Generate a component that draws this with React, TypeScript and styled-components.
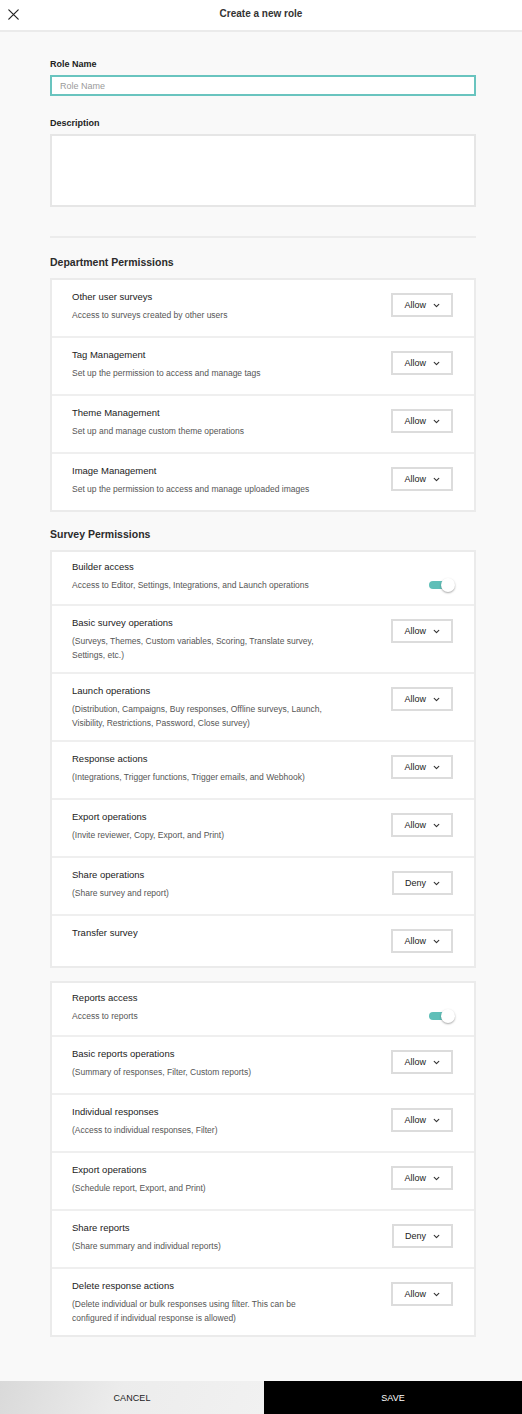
import React from "react";
import styled, { createGlobalStyle } from "styled-components";

const GlobalStyle = createGlobalStyle`
  * { box-sizing: border-box; }
  html, body { margin: 0; padding: 0; }
  body {
    background: #f9f9f9;
    font-family: "Liberation Sans", Arial, Helvetica, sans-serif;
    color: #222;
    -webkit-font-smoothing: antialiased;
  }
`;

const Page = styled.div`
  min-height: 100vh;
  display: flex;
  flex-direction: column;
`;

const Header = styled.header`
  height: 32px;
  background: #fff;
  border-bottom: 2px solid #ebebeb;
  display: grid;
  grid-template-columns: 30px 1fr 30px;
  align-items: center;
`;

const CloseButton = styled.button`
  border: 0;
  background: transparent;
  padding: 0;
  margin-left: 7px;
  width: 12px;
  height: 12px;
  display: flex;
  align-items: center;
  justify-content: center;
  cursor: pointer;
  margin-top: -1px;
`;

const Title = styled.h1`
  margin: 0;
  text-align: center;
  font-size: 10px;
  font-weight: 700;
  color: #333;
  margin-top: -4px;
`;

const Main = styled.main`
  flex: 1;
  padding: 26px 46px 44px 50px;
  display: flex;
  flex-direction: column;
`;

const Field = styled.div<{ $gap?: number }>`
  display: flex;
  flex-direction: column;
  margin-top: ${(p) => p.$gap ?? 0}px;
`;

const Label = styled.label`
  font-size: 9px;
  font-weight: 700;
  line-height: 12px;
  color: #222;
  margin-bottom: 5px;
`;

const TextInput = styled.input`
  height: 21px;
  border: 2px solid #69c4bf;
  background: #fff;
  padding: 0 8px;
  font-family: inherit;
  font-size: 9px;
  color: #222;
  outline: none;
  &::placeholder { color: #9a9a9a; }
`;

const TextArea = styled.textarea`
  height: 73px;
  border: 2px solid #e6e6e6;
  background: #fff;
  resize: none;
  font-family: inherit;
  font-size: 9px;
  outline: none;
`;

const Divider = styled.hr`
  border: 0;
  height: 2px;
  background: #ececec;
  margin: 29px 0 0;
`;

const SectionTitle = styled.h2<{ $gap: number }>`
  margin: ${(p) => p.$gap}px 0 9px;
  font-size: 10.5px;
  line-height: 14px;
  font-weight: 700;
  color: #2b2b2b;
`;

const Card = styled.section<{ $gap?: number }>`
  display: flex;
  flex-direction: column;
  gap: 2px;
  background: #efefef;
  border: 2px solid #ebebeb;
  margin-top: ${(p) => p.$gap ?? 0}px;
`;

const Row = styled.div<{ $toggle?: boolean; $tall?: boolean }>`
  display: flex;
  justify-content: space-between;
  align-items: ${(p) => (p.$toggle ? "flex-end" : "flex-start")};
  padding: ${(p) => (p.$toggle ? "8px 19px 12px 20px" : "10px 21px 10px 20px")};
  min-height: ${(p) => (p.$tall ? 56 : 50)}px;
  background: #fff;
`;

const RowText = styled.div`
  max-width: 256px;
`;

const RowTitle = styled.div`
  font-size: 9.5px;
  line-height: 14px;
  color: #222;
`;

const RowDesc = styled.div`
  margin-top: 4px;
  font-size: 8.5px;
  line-height: 14px;
  color: #555;
`;

const Select = styled.button`
  margin-top: 3px;
  height: 24px;
  border: 2px solid #dcdcdc;
  background: #fff;
  padding: 0 11px;
  display: flex;
  align-items: center;
  gap: 7px;
  font-family: inherit;
  font-size: 9px;
  color: #222;
  cursor: pointer;
`;

const Toggle = styled.div`
  position: relative;
  width: 26px;
  height: 14px;
  display: flex;
  align-items: center;
`;

const Track = styled.span`
  width: 20px;
  height: 8px;
  border-radius: 4px;
  background: #5fbfb8;
`;

const Knob = styled.span`
  position: absolute;
  right: 0;
  top: 0;
  width: 14px;
  height: 14px;
  border-radius: 50%;
  background: #fff;
  box-shadow: 0 1px 2px rgba(0, 0, 0, 0.35);
`;

const Footer = styled.footer`
  display: grid;
  grid-template-columns: 264px 1fr;
  height: 34px;
`;

const FooterButton = styled.button<{ $primary?: boolean }>`
  border: 0;
  font-family: inherit;
  font-size: 9px;
  letter-spacing: 0.1px;
  cursor: pointer;
  color: ${(p) => (p.$primary ? "#fff" : "#222")};
  background: ${(p) =>
    p.$primary ? "#000" : "linear-gradient(110deg, #d9d9d9 0%, #ececec 45%, #f1f1f1 100%)"};
`;

const Chevron = () => (
  <svg width="7" height="5" viewBox="0 0 7 5" fill="none">
    <path d="M1.2 1.3l2.3 2.3 2.3-2.3" stroke="#333" strokeWidth="1.1" strokeLinecap="round" strokeLinejoin="round" />
  </svg>
);

const CloseIcon = () => (
  <svg width="11" height="11" viewBox="0 0 11 11" fill="none">
    <path d="M0.8 0.8l9.4 9.4M10.2 0.8L0.8 10.2" stroke="#222" strokeWidth="1.2" strokeLinecap="round" />
  </svg>
);

type Perm = {
  title: string;
  desc?: string;
  value?: "Allow" | "Deny";
  toggle?: boolean;
};

const department: Perm[] = [
  { title: "Other user surveys", desc: "Access to surveys created by other users", value: "Allow" },
  { title: "Tag Management", desc: "Set up the permission to access and manage tags", value: "Allow" },
  { title: "Theme Management", desc: "Set up and manage custom theme operations", value: "Allow" },
  { title: "Image Management", desc: "Set up the permission to access and manage uploaded images", value: "Allow" },
];

const survey: Perm[] = [
  { title: "Builder access", desc: "Access to Editor, Settings, Integrations, and Launch operations", toggle: true },
  {
    title: "Basic survey operations",
    desc: "(Surveys, Themes, Custom variables, Scoring, Translate survey, Settings, etc.)",
    value: "Allow",
  },
  {
    title: "Launch operations",
    desc: "(Distribution, Campaigns, Buy responses, Offline surveys, Launch, Visibility, Restrictions, Password, Close survey)",
    value: "Allow",
  },
  { title: "Response actions", desc: "(Integrations, Trigger functions, Trigger emails, and Webhook)", value: "Allow" },
  { title: "Export operations", desc: "(Invite reviewer, Copy, Export, and Print)", value: "Allow" },
  { title: "Share operations", desc: "(Share survey and report)", value: "Deny" },
  { title: "Transfer survey", value: "Allow" },
];

const reports: Perm[] = [
  { title: "Reports access", desc: "Access to reports", toggle: true },
  { title: "Basic reports operations", desc: "(Summary of responses, Filter, Custom reports)", value: "Allow" },
  { title: "Individual responses", desc: "(Access to individual responses, Filter)", value: "Allow" },
  { title: "Export operations", desc: "(Schedule report, Export, and Print)", value: "Allow" },
  { title: "Share reports", desc: "(Share summary and individual reports)", value: "Deny" },
  {
    title: "Delete response actions",
    desc: "(Delete individual or bulk responses using filter. This can be configured if individual response is allowed)",
    value: "Allow",
  },
];

const PermissionRow = ({ p }: { p: Perm }) => (
  <Row $toggle={p.toggle} $tall={!!p.desc && !p.toggle}>
    <RowText>
      <RowTitle>{p.title}</RowTitle>
      {p.desc && <RowDesc>{p.desc}</RowDesc>}
    </RowText>
    {p.toggle ? (
      <Toggle role="switch" aria-checked="true">
        <Track />
        <Knob />
      </Toggle>
    ) : (
      <Select type="button">
        {p.value}
        <Chevron />
      </Select>
    )}
  </Row>
);

const PermissionCard = ({ items, gap }: { items: Perm[]; gap?: number }) => (
  <Card $gap={gap}>
    {items.map((p) => (
      <PermissionRow key={p.title} p={p} />
    ))}
  </Card>
);

export default function App() {
  return (
    <Page>
      <GlobalStyle />
      <Header>
        <CloseButton aria-label="Close">
          <CloseIcon />
        </CloseButton>
        <Title>Create a new role</Title>
        <span />
      </Header>
      <Main>
        <Field>
          <Label>Role Name</Label>
          <TextInput placeholder="Role Name" />
        </Field>
        <Field $gap={21}>
          <Label>Description</Label>
          <TextArea />
        </Field>
        <Divider />
        <SectionTitle $gap={17}>Department Permissions</SectionTitle>
        <PermissionCard items={department} />
        <SectionTitle $gap={15}>Survey Permissions</SectionTitle>
        <PermissionCard items={survey} />
        <PermissionCard items={reports} gap={13} />
      </Main>
      <Footer>
        <FooterButton type="button">CANCEL</FooterButton>
        <FooterButton type="button" $primary>
          SAVE
        </FooterButton>
      </Footer>
    </Page>
  );
}
